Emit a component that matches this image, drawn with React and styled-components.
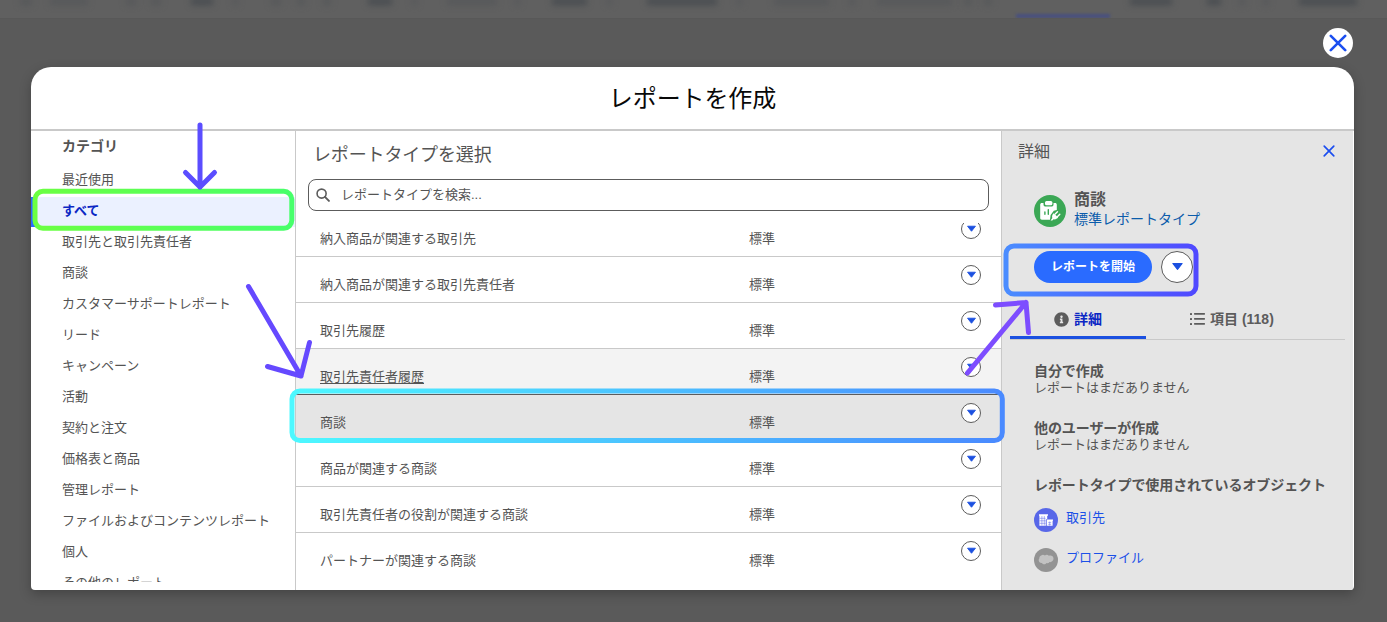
import React from 'react';
import styled, { createGlobalStyle, css } from 'styled-components';
import { FaInfoCircle } from 'react-icons/fa';

const GlobalStyle = createGlobalStyle`
  *, *::before, *::after {
    box-sizing: border-box;
  }

  body {
    margin: 0;
    background-color: #5a5a5a;
    color: #545454;
    font-family: 'Liberation Sans', 'Noto Sans CJK JP', sans-serif;
    font-size: 13px;
    overflow: hidden;
  }

  button {
    font: inherit;
    padding: 0;
    border: none;
    background: none;
  }
`;

const Screen = styled.div`
  position: relative;
  width: 1387px;
  height: 622px;
  display: flex;
  flex-direction: column;
  overflow: hidden;
`;

/* dimmed navigation behind the modal */
const BackNav = styled.div`
  height: 19px;
  flex: none;
  display: flex;
  align-items: flex-start;
  background-color: #606060;
  border-bottom: 1px solid #585858;
  overflow: hidden;
`;

const BackLabel = styled.span`
  flex: none;
  width: ${(p) => p.$w}px;
  height: 7px;
  margin: -2px 0 0 ${(p) => p.$gap}px;
  background-color: ${(p) => (p.$strong ? '#484c50' : '#56585a')};
  filter: blur(3px);
`;

const BackTab = styled.span`
  flex: none;
  width: 94px;
  height: 18px;
  margin-left: 24px;
  border-bottom: 4px solid #474f80;
  filter: blur(1.5px);
`;

const TopBar = styled.div`
  height: 48px;
  flex: none;
  display: flex;
  justify-content: flex-end;
  align-items: flex-start;
  padding: 9px 34px 0 0;
`;

const CloseButton = styled.button`
  width: 30px;
  height: 30px;
  display: flex;
  align-items: center;
  justify-content: center;
  border-radius: 50%;
  background-color: #fff;
`;

const Modal = styled.section`
  width: 1323px;
  height: 523px;
  margin-left: 31px;
  display: flex;
  flex-direction: column;
  background-color: #fff;
  border-radius: 20px 20px 4px 4px;
  box-shadow: 0 4px 12px rgba(0, 0, 0, 0.25);
  overflow: hidden;
`;

const ModalHeader = styled.header`
  height: 64px;
  flex: none;
  display: flex;
  align-items: center;
  justify-content: center;
  padding-top: 1px;
  border-bottom: 2px solid #c9c9c9;
`;

const ModalTitle = styled.h1`
  margin: 0;
  color: #080808;
  font-size: 24px;
  font-weight: 400;
  line-height: 36px;
  letter-spacing: -0.1px;
`;

const ModalBody = styled.div`
  flex: 1;
  min-height: 0;
  display: flex;
`;

const Sidebar = styled.nav`
  width: 265px;
  flex: none;
  padding-top: 5px;
  border-right: 1px solid #c9c9c9;
`;

const SidebarTitle = styled.h2`
  margin: 0 0 9px;
  padding-left: 31px;
  font-size: 14px;
  font-weight: 700;
  line-height: 20px;
`;

const CategoryList = styled.div`
  height: 417px;
  overflow: hidden;
`;

const Category = styled.div`
  height: 31px;
  padding-left: 31px;
  line-height: 28px;
  border-top: 1px solid transparent;
  background-clip: padding-box;

  ${(p) =>
    p.$active &&
    css`
      color: #0b27c4;
      font-weight: 700;
      background-color: #ebf1ff;
      box-shadow: inset 4px 0 0 #2b6bff;
    `}
`;

const Main = styled.main`
  width: 705px;
  flex: none;
  display: flex;
  flex-direction: column;
`;

const MainTitle = styled.h2`
  margin: 10px 0;
  padding-left: 17px;
  font-size: 18px;
  font-weight: 400;
  line-height: 28px;
  letter-spacing: -0.15px;
`;

const SearchBox = styled.div`
  height: 32px;
  flex: none;
  margin: 0 12px 12px;
  padding: 0 8px 0 7px;
  display: flex;
  align-items: center;
  gap: 11px;
  border: 1px solid #5c5c5c;
  border-radius: 8px;
`;

const SearchText = styled.span`
  line-height: 20px;
`;

const RowsViewport = styled.div`
  flex: 1;
  min-height: 0;
  overflow: hidden;
`;

const Rows = styled.div`
  margin-top: -12px;
`;

const Row = styled.div`
  height: 46px;
  padding: 0 20px 0 24px;
  display: flex;
  align-items: flex-start;
  background-color: ${(p) => (p.$selected ? '#e5e5e5' : p.$hovered ? '#f3f3f3' : '#fff')};
  border-bottom: 1px solid ${(p) => (p.$hovered ? '#5c5c5c' : '#c9c9c9')};

  &:last-child {
    border-bottom: none;
  }
`;

const RowName = styled.span`
  width: 429px;
  padding-top: 18px;
  line-height: 20px;
  text-decoration: ${(p) => (p.$underlined ? 'underline' : 'none')};
  text-decoration-thickness: 1px;
  text-underline-offset: 2px;
`;

const RowKind = styled.span`
  flex: 1;
  padding-top: 18px;
  line-height: 20px;
`;

const RoundButton = styled.button`
  width: ${(p) => p.$size}px;
  height: ${(p) => p.$size}px;
  flex: none;
  display: flex;
  align-items: center;
  justify-content: center;
  background-color: #fff;
  border: 1px solid #5c5c5c;
  border-radius: 50%;
`;

const RowAction = styled(RoundButton)`
  margin-top: 8px;
`;

const Details = styled.aside`
  flex: 1;
  margin-right: 1px;
  background-color: #e5e5e5;
  border-left: 1px solid #c9c9c9;
`;

const DetailsHeader = styled.div`
  height: 40px;
  padding: 0 18px 0 16px;
  display: flex;
  align-items: center;
  justify-content: space-between;
  font-size: 16px;
  line-height: 24px;
`;

const DetailsTitle = styled.span`
  padding-top: 2px;
`;

const ReportType = styled.div`
  margin-top: 18px;
  padding-left: 32px;
  display: flex;
  align-items: center;
  gap: 8px;

  svg {
    margin-top: 4px;
  }
`;

const TypeName = styled.div`
  padding-top: 1px;
  font-size: 16px;
  font-weight: 700;
  line-height: 20px;
`;

const TypeLink = styled.div`
  color: #0b5cab;
  font-size: 14px;
  line-height: 19px;
`;

const Actions = styled.div`
  margin-top: 22px;
  padding-left: 32px;
  display: flex;
  gap: 9px;
`;

const StartButton = styled.button`
  width: 118px;
  height: 32px;
  border-radius: 16px;
  background-color: #2a6bff;
  color: #fff;
  font-size: 12px;
  font-weight: 700;
  line-height: 20px;
`;

const Tabs = styled.div`
  height: 41px;
  margin: 16px 8px 0;
  display: flex;
  border-bottom: 1px solid #c9c9c9;
`;

const Tab = styled.div`
  height: 40px;
  padding: 3px 44px 0;
  display: flex;
  align-items: center;
  gap: 5px;
  font-size: 14px;
  font-weight: 700;
  line-height: 20px;
  color: ${(p) => (p.$active ? '#0b27c4' : '#5c5c5c')};
  border-bottom: 3px solid ${(p) => (p.$active ? '#1b50e0' : 'transparent')};

  svg {
    flex: none;
    color: #5c5c5c;
  }
`;

const DetailsBody = styled.div`
  padding: 23px 0 0 32px;
`;

const Block = styled.div`
  margin-bottom: 24px;
`;

const BlockTitle = styled.div`
  font-size: 14px;
  font-weight: 700;
  line-height: 17px;
  letter-spacing: -0.08px;
  white-space: nowrap;
`;

const BlockText = styled.div`
  line-height: 16px;
`;

const ObjectList = styled.div`
  padding-top: 14px;
`;

const ObjectRow = styled.div`
  height: 40px;
  display: flex;
  gap: 8px;
  color: #1b50e8;
  line-height: 20px;
`;

const Annotations = styled.svg`
  position: absolute;
  inset: 0;
  pointer-events: none;
`;

const Caret = ({ size = 11 }) => (
  <svg width={size} height={size * 0.7} viewBox="0 0 10 7">
    <path d="M1.4 1.1h7.2L5 5.7z" fill="#1b50e0" stroke="#1b50e0" strokeWidth="0.8" strokeLinejoin="round" />
  </svg>
);

const Cross = ({ size, weight }) => (
  <svg width={size} height={size} viewBox="0 0 20 20" fill="none">
    <path d="M2 2l16 16M18 2L2 18" stroke="#1b4ef0" strokeWidth={weight} strokeLinecap="round" />
  </svg>
);

const SearchIcon = () => (
  <svg width="14" height="14" viewBox="0 0 13 13" fill="none" stroke="#5c5c5c">
    <circle cx="5.2" cy="5.2" r="4.2" strokeWidth="1.5" />
    <path d="M8.3 8.3l3.7 3.7" strokeWidth="1.8" strokeLinecap="round" />
  </svg>
);

const ListIcon = () => (
  <svg width="15" height="12" viewBox="0 0 15 12" fill="#5c5c5c">
    {[0, 5, 10].map((y) => (
      <g key={y}>
        <rect x="0" y={y} width="2" height="2" rx="0.6" />
        <rect x="4" y={y} width="11" height="1.7" rx="0.6" />
      </g>
    ))}
  </svg>
);

const ReportTypeIcon = () => (
  <svg width="32" height="32" viewBox="0 0 32 32">
    <circle cx="16" cy="16" r="16" fill="#3ba755" />
    <path
      d="M7.9 8h1.6v1.400c0 1.300.9 2.200 2.200 2.200h5.600c1.300 0 2.200-.9 2.200-2.200V8h1.600c1 0 1.700.7 1.700 1.700v5.200l-3 .9-3.200 4.200-.6 4.700H7.900c-1 0-1.700-.7-1.700-1.700V9.700c0-1 .7-1.700 1.700-1.700z"
      fill="#fff"
    />
    <rect x="11" y="6" width="7.400" height="4.200" rx="1.500" fill="#fff" />
    <path d="M10.900 19.200v-2.200M14.300 19.200v-4.600" stroke="#3ba755" strokeWidth="1.400" strokeLinecap="round" />
    <path
      d="M16.600 25.400l1.700-2.300c-.6-1.900 0-3.500 1.400-4.900l4.500 4.400c-1.300 1.500-2.900 2-4.600 1.700l-1.300 1.300z"
      fill="#fff"
    />
    <path d="M21.200 19.100l2.300-2.300M23.600 21.500l2.200-2.200" stroke="#fff" strokeWidth="1.400" strokeLinecap="round" />
  </svg>
);

const AccountIcon = () => (
  <svg width="24" height="24" viewBox="0 0 24 24">
    <circle cx="12" cy="12" r="12" fill="#5867e8" />
    <path d="M5 6.200h9v1.600h-.8v3.400h-1.400v6.600H5.400V7.800H5z" fill="#fff" />
    <path d="M12.700 11.400H19v1.400h-.4v5h-5.900z" fill="#fff" />
    <path
      d="M7.900 8v9.500M10.300 8v9.500M5.600 10.300h6M5.600 12.800h6M5.600 15.300h6M14.200 14.400h3M14.200 16.300h3M15.700 13.600v4"
      stroke="#5867e8"
      strokeWidth="0.5"
    />
  </svg>
);

const ProfileIcon = () => (
  <svg width="24" height="24" viewBox="0 0 24 24">
    <circle cx="12" cy="12" r="12" fill="#939393" />
    <path
      d="M7.200 7.400c1.300-.9 2.700-.7 3.700.1 1.200-1 2.900-.9 3.900.2 2.200-.9 4.700.2 4.700 2.900 0 2.300-1.900 3.800-4 3.500-.7 1.200-2 1.400-3.100 1-.9 1.700-3.500 1.700-4.400-.2-1.900.2-3.300-1-3.300-2.700 0-.8.2-1.400.8-1.900-.4-1.300.3-2.400 1.700-2.900z"
      fill="#c2c2c2"
    />
  </svg>
);

const backLabels = [
  [20, 12],
  [18, 38],
  [38, 10],
  [15, 10],
  [30, 22, true],
  [20, 5],
  [33, 10],
  [16, 8],
  [18, 8],
  [37, 24, true],
  [20, 5],
  [30, 50],
  [18, 5],
  [32, 35, true],
  [20, 5],
  [35, 70, true],
  [20, 5],
  [32, 55],
  [20, 6],
  [22, 75],
  [12, 8],
  [12, 8],
];

const backLabelsRight = [
  [20, 42, true],
  [35, 14, true],
  [18, 6],
  [18, 6],
  [30, 58, true],
];

const categories = [
  '最近使用',
  'すべて',
  '取引先と取引先責任者',
  '商談',
  'カスタマーサポートレポート',
  'リード',
  'キャンペーン',
  '活動',
  '契約と注文',
  '価格表と商品',
  '管理レポート',
  'ファイルおよびコンテンツレポート',
  '個人',
  'その他のレポート',
];

const reportTypes = [
  { name: '納入商品が関連する取引先' },
  { name: '納入商品が関連する取引先責任者' },
  { name: '取引先履歴' },
  { name: '取引先責任者履歴', hovered: true },
  { name: '商談', selected: true },
  { name: '商品が関連する商談' },
  { name: '取引先責任者の役割が関連する商談' },
  { name: 'パートナーが関連する商談' },
];

const App = () => {
  return (
    <Screen>
      <GlobalStyle />
      <BackNav>
        {backLabels.map(([gap, w, strong], i) => (
          <BackLabel key={i} $gap={gap} $w={w} $strong={strong} />
        ))}
        <BackTab />
        {backLabelsRight.map(([gap, w, strong], i) => (
          <BackLabel key={i} $gap={gap} $w={w} $strong={strong} />
        ))}
      </BackNav>
      <TopBar>
        <CloseButton aria-label="閉じる">
          <Cross size={18} weight={2.9} />
        </CloseButton>
      </TopBar>

      <Modal>
        <ModalHeader>
          <ModalTitle>レポートを作成</ModalTitle>
        </ModalHeader>
        <ModalBody>
          <Sidebar>
            <SidebarTitle>カテゴリ</SidebarTitle>
            <CategoryList>
              {categories.map((name) => (
                <Category key={name} $active={name === 'すべて'}>
                  {name}
                </Category>
              ))}
            </CategoryList>
          </Sidebar>

          <Main>
            <MainTitle>レポートタイプを選択</MainTitle>
            <SearchBox>
              <SearchIcon />
              <SearchText>レポートタイプを検索...</SearchText>
            </SearchBox>
            <RowsViewport>
              <Rows>
                {reportTypes.map(({ name, hovered, selected }) => (
                  <Row key={name} $hovered={hovered} $selected={selected}>
                    <RowName $underlined={hovered}>{name}</RowName>
                    <RowKind>標準</RowKind>
                    <RowAction $size={20}>
                      <Caret />
                    </RowAction>
                  </Row>
                ))}
              </Rows>
            </RowsViewport>
          </Main>

          <Details>
            <DetailsHeader>
              <DetailsTitle>詳細</DetailsTitle>
              <Cross size={12} weight={2.8} />
            </DetailsHeader>
            <ReportType>
              <ReportTypeIcon />
              <div>
                <TypeName>商談</TypeName>
                <TypeLink>標準レポートタイプ</TypeLink>
              </div>
            </ReportType>
            <Actions>
              <StartButton>レポートを開始</StartButton>
              <RoundButton $size={32}>
                <Caret size={13} />
              </RoundButton>
            </Actions>
            <Tabs>
              <Tab $active>
                <FaInfoCircle size={15} />
                詳細
              </Tab>
              <Tab>
                <ListIcon />
                項目 (118)
              </Tab>
            </Tabs>
            <DetailsBody>
              <Block>
                <BlockTitle>自分で作成</BlockTitle>
                <BlockText>レポートはまだありません</BlockText>
              </Block>
              <Block>
                <BlockTitle>他のユーザーが作成</BlockTitle>
                <BlockText>レポートはまだありません</BlockText>
              </Block>
              <BlockTitle>レポートタイプで使用されているオブジェクト</BlockTitle>
              <ObjectList>
                <ObjectRow>
                  <AccountIcon />
                  取引先
                </ObjectRow>
                <ObjectRow>
                  <ProfileIcon />
                  プロファイル
                </ObjectRow>
              </ObjectList>
            </DetailsBody>
          </Details>
        </ModalBody>
      </Modal>

      <Annotations width="1387" height="622" viewBox="0 0 1387 622" fill="none" strokeWidth="5">
        <defs>
          <linearGradient id="green" x1="0" x2="1" y1="0" y2="0">
            <stop offset="0" stopColor="#6bff42" />
            <stop offset="1" stopColor="#48ff6b" />
          </linearGradient>
          <linearGradient id="cyan" x1="0" x2="1" y1="0" y2="0">
            <stop offset="0" stopColor="#4df8ff" />
            <stop offset="1" stopColor="#4a8aff" />
          </linearGradient>
          <linearGradient id="blue" x1="0" x2="1" y1="0" y2="0">
            <stop offset="0" stopColor="#4a8cff" />
            <stop offset="1" stopColor="#5049ff" />
          </linearGradient>
        </defs>
        <rect x="35" y="191.3" width="256.8" height="37" rx="8" stroke="url(#green)" />
        <rect x="292" y="391" width="710.3" height="49.5" rx="8" stroke="url(#cyan)" />
        <rect x="1006" y="246" width="190" height="48" rx="8" stroke="url(#blue)" />
        <g strokeLinecap="round" strokeLinejoin="round">
          <path d="M200 125v62M185.5 172.5l14.5 14.5 14.5-14.5" stroke="#5b4dff" />
          <path d="M248.5 286.5L301 376M267.5 366.5l33.5 9.5 8.5-33.5" stroke="#6549ff" />
          <path d="M967.5 373L1026 302.5M995.5 305l30.5-2.5 2.5 30" stroke="#7d4dff" />
        </g>
      </Annotations>
    </Screen>
  );
};

export default App;
